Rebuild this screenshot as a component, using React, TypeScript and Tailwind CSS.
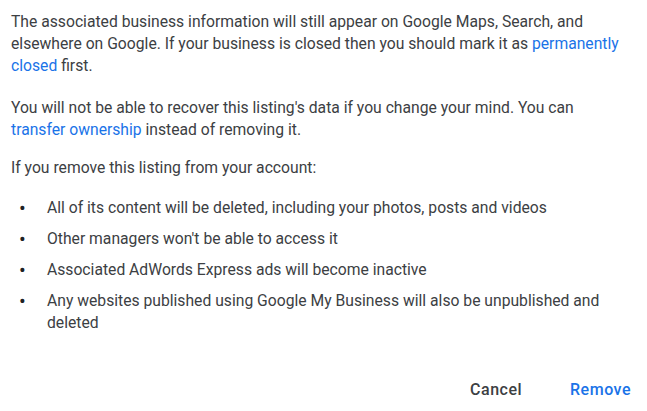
import React from "react"

const bullets = [
  "All of its content will be deleted, including your photos, posts and videos",
  "Other managers won't be able to access it",
  "Associated AdWords Express ads will become inactive",
  "Any websites published using Google My Business will also be unpublished and deleted",
]

export default function App() {
  return (
    <div className="w-[647px] h-[411px] bg-white font-['Roboto',sans-serif] text-[15.7px] leading-[22px] text-[#3c4043]">
      <div className="w-[630px] pl-[11px] pt-[11px]">
        <p>
          The associated business information will still appear on Google Maps, Search, and elsewhere on Google. If
          your business is closed then you should mark it as{" "}
          <a className="text-[#1a73e8]">permanently closed</a> first.
        </p>
        <p className="mt-[20px]">
          You will not be able to recover this listing's data if you change your mind. You can{" "}
          <a className="text-[#1a73e8]">transfer ownership</a> instead of removing it.
        </p>
        <p className="mt-[16px]">If you remove this listing from your account:</p>
        <ul className="mt-[18px] flex flex-col gap-[9px]">
          {bullets.map((b) => (
            <li key={b} className="flex">
              <span className="w-[36px] shrink-0 pl-[8px] text-[20px] text-[#202124]">•</span>
              <span>{b}</span>
            </li>
          ))}
        </ul>
      </div>
      <div className="mt-[45px] flex justify-end gap-[32px] pr-[8px]">
        <button className="px-[8px] text-[16px] font-medium text-[#3c4043] tracking-[0.5px]">Cancel</button>
        <button className="px-[8px] text-[16px] font-medium text-[#1a73e8] tracking-[0.5px]">Remove</button>
      </div>
    </div>
  )
}
